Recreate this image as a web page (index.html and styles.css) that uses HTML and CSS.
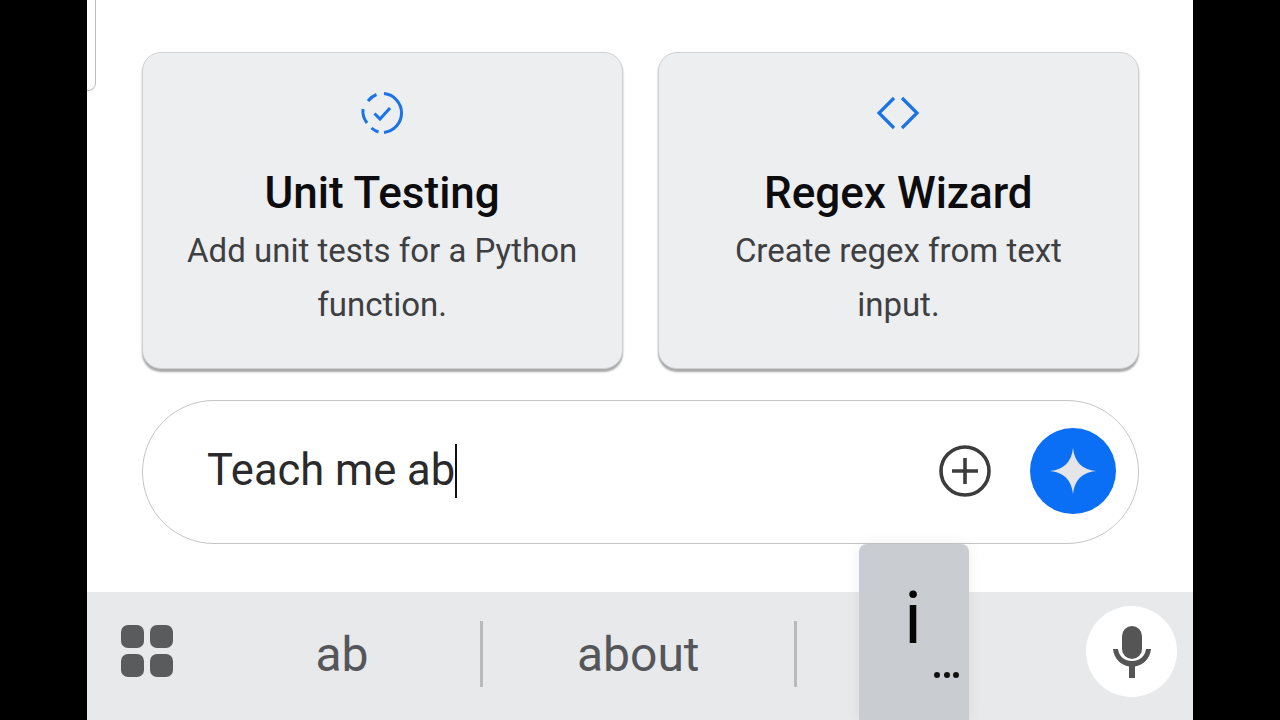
FILE: index.html
```html
<!DOCTYPE html>
<html lang="en">
<head>
<meta charset="utf-8">
<title>Prompt</title>
<link rel="stylesheet" href="styles.css">
</head>
<body>
<main class="screen">
  <div class="tab"></div>
  <section class="cards">
    <article class="card">
      <svg class="card-icon" viewBox="0 0 44 44" width="44" height="44" fill="none" stroke="#1a73e8" stroke-width="3">
        <path d="M24 2.6A19.5 19.5 0 0 1 24 41.4"/>
        <path d="M18.5 41A19.5 19.5 0 0 1 11.5 37"/>
        <path d="M7 32A19.5 19.5 0 0 1 3 18"/>
        <path d="M8 10A19.5 19.5 0 0 1 16.5 3.5"/>
        <path d="M14.5 22.5L20 28L30 17"/>
      </svg>
      <h2 class="card-title">Unit Testing</h2>
      <p class="card-text">Add unit tests for a Python function.</p>
    </article>
    <article class="card">
      <svg class="card-icon" viewBox="0 0 44 44" width="44" height="44" fill="none" stroke="#1a73e8" stroke-width="3.2">
        <path d="M18 7L3 22L18 37"/>
        <path d="M26 7L41 22L26 37"/>
      </svg>
      <h2 class="card-title">Regex Wizard</h2>
      <p class="card-text card-text-narrow">Create regex from text input.</p>
    </article>
  </section>
  <section class="prompt">
    <div class="prompt-text"><span>Teach me ab</span><i class="caret"></i></div>
    <svg class="plus" viewBox="0 0 52 52" width="52" height="52" fill="none" stroke="#3c3c3c">
      <circle cx="26" cy="26" r="24" stroke-width="3.6"/>
      <path d="M13 26H39M26 13V39" stroke-width="3.6"/>
    </svg>
    <button class="send" type="button" aria-label="Send">
      <svg viewBox="0 0 48 48" width="48" height="48"><path fill="#e3e5e8" d="M24 1C25.500 15 33 22.500 47 24C33 25.500 25.500 33 24 47C22.500 33 15 25.500 1 24C15 22.500 22.500 15 24 1Z"/></svg>
    </button>
  </section>
  <footer class="keyboard">
    <div class="apps"><b></b><b></b><b></b><b></b></div>
    <div class="word word-ab">ab</div>
    <div class="sep"></div>
    <div class="word word-about">about</div>
    <div class="sep"></div>
    <div class="mic">
      <svg viewBox="0 0 40 52" width="40" height="52" fill="#555">
        <rect x="10" y="0" width="20" height="33" rx="10"/>
        <path d="M1 23H6C7 31 13 35 20 35C27 35 33 31 34 23H39C38 33 31 39 23 40.500V52H17V40.500C9 39 2 33 1 23Z"/>
      </svg>
    </div>
  </footer>
  <div class="popup"><span class="popup-letter">i</span><span class="popup-dots"><b></b><b></b><b></b></span></div>
</main>
</body>
</html>
```
FILE: styles.css
```css
* { box-sizing: border-box; }
html, body { margin: 0; height: 720px; background: #000; overflow: hidden; }
body { display: flex; justify-content: flex-start; padding-left: 87px; font-family: Roboto, "Liberation Sans", sans-serif; }
.screen { position: relative; width: 1106px; height: 720px; background: #fff; padding-top: 52px; display: flex; flex-direction: column; }
.tab { position: absolute; left: 0; top: -10px; width: 9px; height: 101px; border: 1.5px solid #bdbdbd; border-left: 0; border-radius: 0 0 8px 0; }
.cards { display: flex; gap: 35px; margin: 0 54px 0 54.500px; }
.card { flex: 1; height: 317px; background: #edeef0; border: 1.5px solid #d0d1d3; border-radius: 19px; box-shadow: 0 3px 2px #a9a9a9; display: flex; flex-direction: column; align-items: center; padding-top: 38px; }
.card-icon { display: block; }
.card-title { margin: 34px 0 0; font-size: 44px; line-height: 48px; font-weight: 500; color: #0c0c0e; }
.card-text { margin: 7px 0 0; width: 420px; font-size: 33px; line-height: 54px; font-weight: 400; color: #3e3f42; text-align: center; }
.card-text-narrow { width: 360px; }
.prompt { margin: 31px 54px 0 54.500px; height: 144px; border: 1.5px solid #c6c6c6; border-radius: 72px; display: flex; align-items: center; padding: 0 22px 2px 64.500px; }
.prompt-text { flex: 1; display: flex; align-items: center; font-size: 43.500px; line-height: 54px; color: #2a2a2c; }
.caret { width: 2px; height: 54px; background: #111; margin-left: 0; }
.plus { margin-right: 39px; }
.send { width: 86px; height: 86px; padding: 0; border: 0; border-radius: 50%; background: #0b6ff5; display: flex; align-items: center; justify-content: center; }
.keyboard { margin-top: 48px; height: 128px; background: #e8e9eb; display: flex; align-items: center; padding-bottom: 4px; position: relative; }
.apps { display: grid; grid-template-columns: 23px 23px; grid-auto-rows: 23px; gap: 6px; margin-left: 34px; margin-top: -6px; flex: none; }
.apps b { background: #5a5b5d; border-radius: 7px; }
.word { font-size: 48px; line-height: 54px; color: #55565a; text-align: center; margin-top: 2px; flex: none; }
.word-ab { width: 307px; padding-left: 31px; }
.word-about { width: 311.500px; }
.sep { width: 2.500px; height: 66px; background: #b9babc; flex: none; }
.mic { position: absolute; right: 16px; top: 14px; width: 91px; height: 91px; border-radius: 50%; background: #fff; display: flex; align-items: center; justify-content: center; }
.popup { position: absolute; left: 772px; top: 544px; width: 110px; height: 176px; background: #c9ccd0; border-radius: 8px 8px 0 0; box-shadow: 0 0 14px rgba(0,0,0,.07); }
.popup-letter { position: absolute; left: 0; width: 108px; top: 33px; text-align: center; font-size: 72px; line-height: 84px; color: #050505; }
.popup-dots { position: absolute; left: 75px; top: 128px; display: flex; gap: 3.500px; }
.popup-dots b { width: 6px; height: 6px; border-radius: 50%; background: #111; }
```
